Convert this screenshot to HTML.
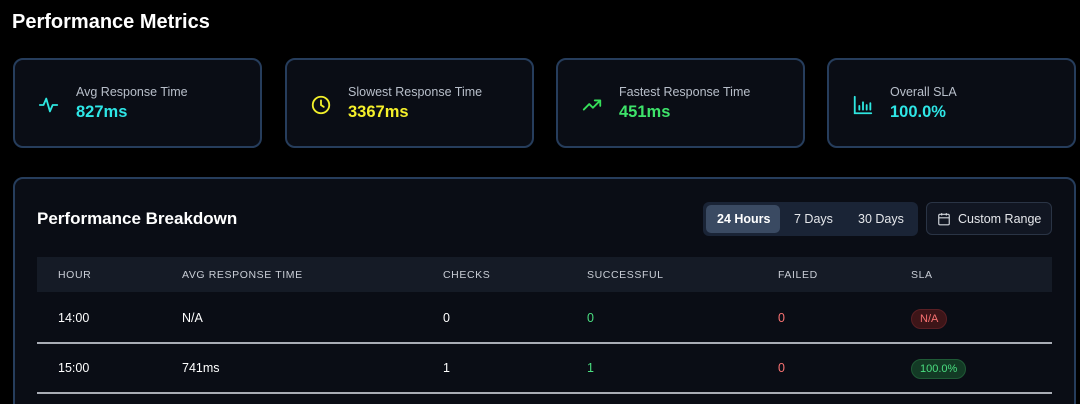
<!DOCTYPE html>
<html><head><style>
*{box-sizing:border-box;margin:0;padding:0}
html,body{width:1080px;height:404px;overflow:hidden}
body{background:#000;font-family:"Liberation Sans",sans-serif;color:#e5e7eb;position:relative}
h1{position:absolute;left:12px;top:11px;font-size:20px;font-weight:700;color:#fff}
.card{position:absolute;top:58px;width:249px;height:90px;border:2.5px solid #263d5c;border-radius:10px;background:#0a0d15}
.card svg{position:absolute;left:23px;top:34px}
.card .l{position:absolute;left:61px;top:25px;font-size:12.5px;color:#b8bfca}
.card .v{position:absolute;left:61px;top:43px;font-size:16.5px;font-weight:700}
.panel{position:absolute;left:13px;top:177px;width:1063px;height:240px;border:2.5px solid #263d5c;border-radius:10px;background:#0a0d15}
.pt{position:absolute;left:37px;top:209px;font-size:17px;font-weight:700;color:#fff}
.seg{position:absolute;left:703px;top:202px;width:215px;height:34px;background:#1a2436;border-radius:6px}
.seg span{position:absolute;top:10px;font-size:12.5px;color:#e5e7eb}
.act{position:absolute;left:3px;top:3px;width:74px;height:28px;background:#3a4a62;border-radius:5px}
.cr{position:absolute;left:926px;top:202px;width:126px;height:33px;border:1px solid #2a3445;border-radius:6px;background:#111622;font-size:12.5px}
.th{position:absolute;left:37px;top:257px;width:1015px;height:35px;background:#151b26}
.c{position:absolute;font-size:12.5px;color:#fff}
.h{font-size:10.5px;color:#c9ced6;letter-spacing:.6px;top:269px}
.line{position:absolute;left:37px;width:1015px;height:1.5px;background:#a9adb5}
.badge{position:absolute;font-size:11px;border-radius:10px;padding:3px 8px}
</style></head><body>
<h1>Performance Metrics</h1>
<div class="card" style="left:13px"><svg width="22" height="22" viewBox="0 0 24 24" fill="none" stroke="#2ee6e0" stroke-width="2" stroke-linecap="round" stroke-linejoin="round"><path d="M2 12h4l3-7 4 14 3-7h5"/></svg><div class="l">Avg Response Time</div><div class="v" style="color:#2ee6e6">827ms</div></div>
<div class="card" style="left:285px"><svg width="22" height="22" viewBox="0 0 24 24" fill="none" stroke="#f2ef2a" stroke-width="2" stroke-linecap="round"><circle cx="12" cy="12" r="9"/><path d="M12 7v5l3 2"/></svg><div class="l">Slowest Response Time</div><div class="v" style="color:#f5f02a">3367ms</div></div>
<div class="card" style="left:556px"><svg width="22" height="22" viewBox="0 0 24 24" fill="none" stroke="#36e05a" stroke-width="2" stroke-linecap="round" stroke-linejoin="round"><path d="M3 17l6-6 4 4 8-8M15 7h6v6"/></svg><div class="l">Fastest Response Time</div><div class="v" style="color:#3ee36a">451ms</div></div>
<div class="card" style="left:827px"><svg width="22" height="22" viewBox="0 0 24 24" fill="none" stroke="#2ee6e0" stroke-width="2" stroke-linecap="round"><path d="M3 3v18h18M8 17v-4M12 17v-8M16 17v-5M20 17v-7"/></svg><div class="l">Overall SLA</div><div class="v" style="color:#2ee6e6">100.0%</div></div>
<div class="panel"></div>
<div class="pt">Performance Breakdown</div>
<div class="seg"><div class="act"></div><span style="left:14px;font-weight:600;color:#fff">24 Hours</span><span style="left:91px">7 Days</span><span style="left:155px">30 Days</span></div>
<div class="cr"><svg style="position:absolute;left:10px;top:9px" width="14" height="14" viewBox="0 0 24 24" fill="none" stroke="#d1d5db" stroke-width="2"><rect x="3" y="4" width="18" height="18" rx="2"/><path d="M3 10h18M8 2v4M16 2v4"/></svg><span style="position:absolute;left:31px;top:9px">Custom Range</span></div>
<div class="th"></div>
<div class="c h" style="left:58px">HOUR</div><div class="c h" style="left:182px">AVG RESPONSE TIME</div><div class="c h" style="left:443px">CHECKS</div><div class="c h" style="left:587px">SUCCESSFUL</div><div class="c h" style="left:778px">FAILED</div><div class="c h" style="left:911px">SLA</div>
<div class="c" style="left:58px;top:311px">14:00</div><div class="c" style="left:182px;top:311px">N/A</div><div class="c" style="left:443px;top:311px">0</div><div class="c" style="left:587px;top:311px;color:#4ade80">0</div><div class="c" style="left:778px;top:311px;color:#f87171">0</div>
<div class="badge" style="left:911px;top:309px;background:#3d1518;color:#f87171;border:1px solid #5a1f24">N/A</div>
<div class="line" style="top:342px"></div>
<div class="c" style="left:58px;top:361px">15:00</div><div class="c" style="left:182px;top:361px">741ms</div><div class="c" style="left:443px;top:361px">1</div><div class="c" style="left:587px;top:361px;color:#4ade80">1</div><div class="c" style="left:778px;top:361px;color:#f87171">0</div>
<div class="badge" style="left:911px;top:359px;background:#133a25;color:#4ade80;border:1px solid #1f5a36">100.0%</div>
<div class="line" style="top:392px"></div>
</body></html>
